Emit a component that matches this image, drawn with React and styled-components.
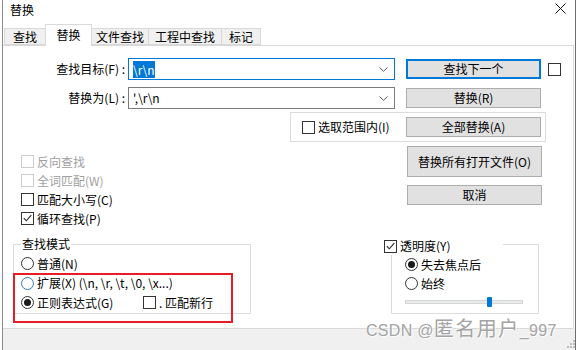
import React from "react";
import styled, { createGlobalStyle } from "styled-components";

const GlobalStyle = createGlobalStyle`
  html, body { margin: 0; padding: 0; background: #ffffff; }
  body {
    font-family: "Noto Sans CJK SC", "Noto Sans", sans-serif;
    font-size: 12px;
    color: #000000;
  }
  * { box-sizing: border-box; }
`;

const Window = styled.div`
  position: relative;
  width: 577px;
  height: 350px;
  overflow: hidden;
  background: #ffffff;
  padding-left: 2px;
`;

const Frame = styled.div`
  width: 574px;
  height: 350px;
  border-left: 1px solid #8a8a8a;
  border-right: 1px solid #6e6e6e;
  display: flex;
  flex-direction: column;
`;

const TitleBar = styled.div`
  height: 23px;
  flex: none;
  display: flex;
  align-items: center;
  justify-content: space-between;
  padding: 0 9px 3px 7px;
`;

const TitleText = styled.span`
  font-size: 12px;
  line-height: 16px;
`;

const CloseIcon = styled.svg`
  width: 11px;
  height: 11px;
  margin-top: -3px;
`;

const TabRow = styled.div`
  height: 22px;
  flex: none;
  display: flex;
  align-items: flex-end;
  padding-left: 1px;
`;

const Tab = styled.div`
  position: relative;
  z-index: ${(p) => (p.$active ? 2 : 1)};
  width: ${(p) => p.$w}px;
  height: ${(p) => (p.$active ? 22 : 17)}px;
  margin-right: -1px;
  margin-bottom: ${(p) => (p.$active ? -1 : 0)}px;
  padding-bottom: ${(p) => (p.$active ? 2 : 0)}px;
  border: 1px solid #d9d9d9;
  border-bottom: ${(p) => (p.$active ? "none" : "1px solid #d9d9d9")};
  background: ${(p) => (p.$active ? "#ffffff" : "#f0f0f0")};
  display: flex;
  align-items: center;
  justify-content: center;
  font-size: 12px;
  line-height: 14px;
`;

const Panel = styled.div`
  position: relative;
  height: 284px;
  flex: none;
  width: 571px;
  border-top: 1px solid #d9d9d9;
  border-right: 1px solid #d9d9d9;
  border-bottom: 1px solid #d9d9d9;
  display: flex;
  flex-direction: column;
`;

const BottomStrip = styled.div`
  flex: 1;
  background: #f0f0f0;
`;

const FieldRow = styled.div`
  display: flex;
  align-items: center;
  height: 22px;
  margin-top: ${(p) => p.$mt}px;
`;

const FieldLabel = styled.span`
  width: 122px;
  margin-right: 3px;
  text-align: right;
  white-space: pre;
  line-height: 16px;
`;

const Combo = styled.div`
  width: 267px;
  height: 22px;
  border: 1px solid ${(p) => (p.$focused ? "#0078d7" : "#7a7a7a")};
  display: flex;
  align-items: center;
  justify-content: space-between;
  padding: 0 6px 0 4px;
  margin-right: 11px;
  background: #ffffff;
`;

const ComboText = styled.span`
  line-height: 16px;
  white-space: pre;
`;

const Selected = styled.span`
  background: #0078d7;
  color: #ffffff;
  display: inline-block;
  line-height: 17px;
`;

const Chevron = styled.svg`
  width: 9px;
  height: 5px;
`;

const Button = styled.div`
  width: 135px;
  height: ${(p) => p.$h || 20}px;
  border: ${(p) => (p.$default ? "2px solid #0078d7" : "1px solid #adadad")};
  background: #e1e1e1;
  display: flex;
  align-items: center;
  justify-content: center;
  line-height: 16px;
  flex: none;
`;

const Option = styled.div`
  display: flex;
  align-items: center;
  gap: 3px;
  height: ${(p) => p.$h || 19}px;
  width: ${(p) => (p.$w ? `${p.$w}px` : "auto")};
  color: ${(p) => (p.$disabled ? "#a0a0a0" : "#000000")};
  line-height: 16px;
  white-space: pre;
  flex: none;
`;

const BoxMark = styled.span`
  width: 13px;
  height: 13px;
  flex: none;
  border: 1px solid ${(p) => (p.$disabled ? "#cccccc" : "#333333")};
  background: #ffffff;
  display: inline-flex;
  align-items: center;
  justify-content: center;
`;

const RadioMark = styled.span`
  width: 13px;
  height: 13px;
  flex: none;
  border-radius: 50%;
  border: 1px solid ${(p) => (p.$hover ? "#2f7bc4" : "#333333")};
  background: #ffffff;
  display: inline-flex;
  align-items: center;
  justify-content: center;
  &::after {
    content: "";
    display: ${(p) => (p.$checked ? "block" : "none")};
    width: 7px;
    height: 7px;
    border-radius: 50%;
    background: #1a1a1a;
  }
`;

const CheckSvg = styled.svg`
  width: 9px;
  height: 9px;
`;

function CheckBox({ label, checked, disabled, w, h }) {
  return (
    <Option $disabled={disabled} $w={w} $h={h}>
      <BoxMark $disabled={disabled}>
        {checked && (
          <CheckSvg viewBox="0 0 9 9">
            <polyline points="0.8,4.2 3.3,6.8 8.3,1.2" fill="none" stroke="#222" strokeWidth="1.1" />
          </CheckSvg>
        )}
      </BoxMark>
      {label && <span>{label}</span>}
    </Option>
  );
}

function Radio({ label, checked, hover, w, h }) {
  return (
    <Option $w={w} $h={h}>
      <RadioMark $checked={checked} $hover={hover} />
      <span>{label}</span>
    </Option>
  );
}

const SideCheck = styled.div`
  margin-left: 7px;
  display: flex;
`;

const SelectionBox = styled.div`
  margin-top: 3px;
  margin-left: 287px;
  width: 256px;
  height: 30px;
  border: 1px solid #dcdcdc;
  display: flex;
  align-items: center;
  justify-content: space-between;
  padding: 0 4px 0 11px;
`;

const MidRow = styled.div`
  margin-top: 4px;
  display: flex;
  align-items: flex-start;
`;

const OptionList = styled.div`
  margin-left: 18px;
  padding-top: 6px;
  display: flex;
  flex-direction: column;
`;

const ButtonStack = styled.div`
  margin-left: auto;
  margin-right: 31px;
  display: flex;
  flex-direction: column;
  gap: 8px;
`;

const BottomRow = styled.div`
  display: flex;
  align-items: flex-start;
`;

const ModeGroup = styled.fieldset`
  margin: 8px 0 0 10px;
  width: 238px;
  height: 78px;
  min-width: 0;
  border: 1px solid #dcdcdc;
  padding: 2px 0 0 7px;
`;

const ModeLegend = styled.legend`
  padding: 0 1px;
  line-height: 16px;
  font-size: 12px;
`;

const ModeRow = styled.div`
  display: flex;
  align-items: center;
`;

const TransWrap = styled.div`
  margin: 9px 0 0 133px;
  display: flex;
  flex-direction: column;
`;

const TransHeader = styled.div`
  position: relative;
  z-index: 1;
  width: 119px;
  height: 18px;
  background: #ffffff;
  display: flex;
  align-items: center;
`;

const TransGroup = styled.div`
  margin: -11px 0 0 7px;
  width: 148px;
  height: 70px;
  border: 1px solid #dcdcdc;
  padding: 10px 0 0 13px;
  display: flex;
  flex-direction: column;
`;

const SliderBox = styled.div`
  position: relative;
  width: 119px;
  height: 16px;
  margin-top: 0.5px;
  display: flex;
  align-items: center;
`;

const Track = styled.div`
  width: 118px;
  height: 4px;
  background: #e7eaea;
  border: 1px solid #d6d6d6;
`;

const Thumb = styled.div`
  position: absolute;
  left: 82px;
  top: 3px;
  width: 5px;
  height: 10px;
  background: #0078d7;
  border-radius: 1px;
`;

const Highlight = styled.div`
  position: absolute;
  left: 10px;
  top: 227px;
  width: 220px;
  height: 50px;
  border: 2px solid #e81c24;
  pointer-events: none;
`;

const Watermark = styled.div`
  position: absolute;
  left: 366px;
  top: 318px;
  font-family: "Liberation Sans", "Noto Sans CJK SC", sans-serif;
  font-size: 16px;
  line-height: 20px;
  color: #a4a4a4;
  text-shadow: 1px 1px 1px rgba(255, 255, 255, 0.9), -1px -1px 1px rgba(255, 255, 255, 0.6);
  white-space: pre;
  letter-spacing: 0.3px;
`;

const WmCjk = styled.span`
  font-family: "Noto Sans CJK SC", sans-serif;
  font-size: 20px;
  letter-spacing: 1.5px;
`;

const Grip = styled.svg`
  position: absolute;
  right: 2px;
  bottom: 2px;
  width: 9px;
  height: 9px;
`;

export default function App() {
  return (
    <>
      <GlobalStyle />
      <Window>
        <Frame>
          <TitleBar>
            <TitleText>替换</TitleText>
            <CloseIcon viewBox="0 0 11 11">
              <line x1="0.5" y1="0.5" x2="10.5" y2="10.5" stroke="#111" strokeWidth="1" />
              <line x1="10.5" y1="0.5" x2="0.5" y2="10.5" stroke="#111" strokeWidth="1" />
            </CloseIcon>
          </TitleBar>
          <TabRow>
            <Tab $w={42}>查找</Tab>
            <Tab $w={47} $active>替换</Tab>
            <Tab $w={58}>文件查找</Tab>
            <Tab $w={74}>工程中查找</Tab>
            <Tab $w={40}>标记</Tab>
          </TabRow>
          <Panel>
            <FieldRow $mt={12}>
              <FieldLabel>查找目标(F) :</FieldLabel>
              <Combo $focused>
                <ComboText>
                  <Selected>\r\n</Selected>
                </ComboText>
                <Chevron viewBox="0 0 9 5">
                  <polyline points="0.5,0.5 4.5,4.3 8.5,0.5" fill="none" stroke="#5a5a5a" strokeWidth="1" />
                </Chevron>
              </Combo>
              <Button $default>查找下一个</Button>
              <SideCheck>
                <CheckBox />
              </SideCheck>
            </FieldRow>
            <FieldRow $mt={7}>
              <FieldLabel>替换为(L) :</FieldLabel>
              <Combo>
                <ComboText>',\r\n</ComboText>
                <Chevron viewBox="0 0 9 5">
                  <polyline points="0.5,0.5 4.5,4.3 8.5,0.5" fill="none" stroke="#5a5a5a" strokeWidth="1" />
                </Chevron>
              </Combo>
              <Button>替换(R)</Button>
            </FieldRow>
            <SelectionBox>
              <CheckBox label="选取范围内(I)" />
              <Button>全部替换(A)</Button>
            </SelectionBox>
            <MidRow>
              <OptionList>
                <CheckBox label="反向查找" disabled />
                <CheckBox label="全词匹配(W)" disabled />
                <CheckBox label="匹配大小写(C)" />
                <CheckBox label="循环查找(P)" checked />
              </OptionList>
              <ButtonStack>
                <Button $h={31}>替换所有打开文件(O)</Button>
                <Button>取消</Button>
              </ButtonStack>
            </MidRow>
            <BottomRow>
              <ModeGroup>
                <ModeLegend>查找模式</ModeLegend>
                <Radio label="普通(N)" h={19.5} />
                <Radio label="扩展(X) (\n, \r, \t, \0, \x...)" hover h={19.5} />
                <ModeRow>
                  <Radio label="正则表达式(G)" checked w={122} h={19.5} />
                  <CheckBox label=". 匹配新行" h={19.5} />
                </ModeRow>
              </ModeGroup>
              <TransWrap>
                <TransHeader>
                  <CheckBox label="透明度(Y)" checked h={18} />
                </TransHeader>
                <TransGroup>
                  <Radio label="失去焦点后" checked />
                  <Radio label="始终" />
                  <SliderBox>
                    <Track />
                    <Thumb />
                  </SliderBox>
                </TransGroup>
              </TransWrap>
            </BottomRow>
            <Highlight />
          </Panel>
          <BottomStrip />
        </Frame>
        <Watermark>
          CSDN @<WmCjk>匿名用户</WmCjk>_997
        </Watermark>
        <Grip viewBox="0 0 9 9">
          <rect x="7" y="1" width="2" height="2" fill="#bdbdbd" />
          <rect x="4" y="4" width="2" height="2" fill="#bdbdbd" />
          <rect x="7" y="4" width="2" height="2" fill="#bdbdbd" />
          <rect x="1" y="7" width="2" height="2" fill="#bdbdbd" />
          <rect x="4" y="7" width="2" height="2" fill="#bdbdbd" />
          <rect x="7" y="7" width="2" height="2" fill="#bdbdbd" />
        </Grip>
      </Window>
    </>
  );
}
